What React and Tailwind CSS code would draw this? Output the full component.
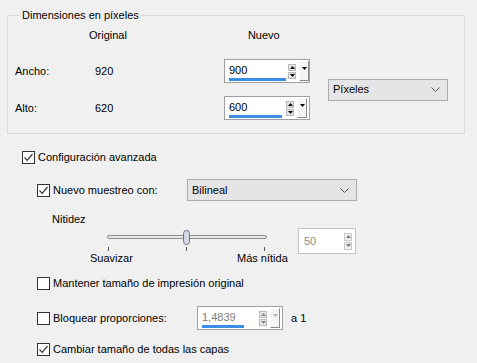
import React from 'react';

const font = { fontFamily: '"Liberation Sans", Arial, sans-serif' };

function Check({ checked }) {
  return (
    <span className="w-[13px] h-[13px] border border-[#333] bg-white flex items-center justify-center shrink-0">
      {checked && (
        <svg width="11" height="11" viewBox="0 0 11 11">
          <path d="M1.5 5.5 L4.2 8.3 L9.5 2" fill="none" stroke="#333" strokeWidth="1.2" />
        </svg>
      )}
    </span>
  );
}

function Arrow({ dir = 'up', color = '#000' }) {
  return (
    <svg width="5" height="3" viewBox="0 0 5 3">
      {dir === 'up' ? <path d="M0 3 L2.5 0 L5 3 Z" fill={color} /> : <path d="M0 0 L2.5 3 L5 0 Z" fill={color} />}
    </svg>
  );
}

function SpinField({ value, underline, disabled, width = 'w-[86px]' }) {
  const c = disabled ? '#8a8a8a' : '#000';
  return (
    <div className={`${width} h-[24px] border border-[#a0a0a0] bg-white flex items-stretch`}>
      <div className="flex-1 flex flex-col justify-center pl-[4px] pr-[2px]">
        <span className={`leading-[14px] mt-[2px] ${disabled ? 'text-[#7d7d7d]' : 'text-black'}`}>{value}</span>
        <span className="h-[3px] mt-[1px] bg-[#3b8ee6]" style={{ width: underline }} />
      </div>
      <div className="flex flex-col justify-center gap-[1px] pr-[3px]">
        <span className="w-[8px] h-[7px] bg-[#e6e6e6] border border-[#b9b9b9] flex items-center justify-center"><Arrow dir="up" color={c} /></span>
        <span className="w-[8px] h-[7px] bg-[#e6e6e6] border border-[#b9b9b9] flex items-center justify-center"><Arrow dir="down" color={c} /></span>
      </div>
      <div className="flex items-center pr-[2px]">
        <span className="w-[10px] h-[20px] bg-[#f4f4f4] border-r border-b border-[#8a8a8a] border-l border-t border-l-white border-t-white flex items-start justify-center pt-[5px]">
          <Arrow dir="down" color={disabled ? '#b5b5b5' : '#000'} />
        </span>
      </div>
    </div>
  );
}

function Select({ label, width }) {
  return (
    <div className={`${width} h-[22px] bg-[#e5e5e5] border border-[#acacac] flex items-center justify-between pl-[4px] pr-[7px]`}>
      <span>{label}</span>
      <svg width="9" height="5" viewBox="0 0 9 5">
        <path d="M0.5 0.5 L4.5 4.5 L8.5 0.5" fill="none" stroke="#555" strokeWidth="1" />
      </svg>
    </div>
  );
}

export default function App() {
  return (
    <div className="w-[477px] h-[363px] bg-[#f0f0f0] overflow-hidden text-[11px] text-black leading-none" style={font}>
      <fieldset className="ml-[7px] w-[458px] h-[125px] border border-[#dcdcdc] mt-[9px] px-[7px]">
        <legend className="ml-[6px] px-[1px] leading-[13px]">Dimensiones en píxeles</legend>
        <div className="flex h-[14px] items-center mt-[6px]">
          <span className="ml-[74px]">Original</span>
          <span className="ml-[121px]">Nuevo</span>
        </div>
        <div className="flex items-center mt-[17px]">
          <div className="flex flex-col">
            <div className="flex items-center h-[24px]">
              <span className="w-[80px]">Ancho:</span>
              <span className="w-[129px]">920</span>
              <SpinField value="900" underline="57px" />
            </div>
            <div className="flex items-center h-[24px] mt-[13px]">
              <span className="w-[80px]">Alto:</span>
              <span className="w-[129px]">620</span>
              <SpinField value="600" underline="53px" />
            </div>
          </div>
          <div className="ml-[18px]">
            <Select label="Píxeles" width="w-[120px]" />
          </div>
        </div>
      </fieldset>

      <div className="flex items-center gap-[3px] ml-[22px] mt-[16px] h-[14px]">
        <Check checked />
        <span>Configuración avanzada</span>
      </div>

      <div className="flex items-center ml-[37px] mt-[15px] h-[22px]">
        <Check checked />
        <span className="ml-[3px] w-[134px]">Nuevo muestreo con:</span>
        <Select label="Bilineal" width="w-[170px]" />
      </div>

      <div className="ml-[52px] mt-[11px] h-[14px] flex items-center">Nitidez</div>

      <div className="flex items-start ml-[105px] mt-[4px] h-[21px]">
        <div className="w-[164px] h-[21px] relative">
          <div className="absolute left-[2px] right-[2px] top-[5px] h-[4px] rounded-full bg-[#e7e7e7] border border-[#8f8f8f]" />
          <div className="absolute left-[78px] top-0 w-[7px] h-[15px] rounded-full bg-[#d4d8e6] border border-[#707080]" />
          <div className="absolute left-[3px] top-[17px] w-px h-[4px] bg-[#555]" />
          <div className="absolute left-[81px] top-[17px] w-px h-[4px] bg-[#555]" />
          <div className="absolute left-[159px] top-[17px] w-px h-[4px] bg-[#555]" />
        </div>
        <div className="ml-[29px] -mt-[2px] w-[58px] h-[26px] shrink-0 border border-[#c5c5c5] bg-white flex items-center justify-between pl-[5px] pr-[3px]">
          <span className="text-[#8a8a8a]">50</span>
          <div className="flex flex-col gap-[1px]">
            <span className="w-[8px] h-[8px] bg-[#f0f0f0] border border-[#c9c9c9] flex items-center justify-center"><Arrow dir="up" color="#777" /></span>
            <span className="w-[8px] h-[8px] bg-[#f0f0f0] border border-[#c9c9c9] flex items-center justify-center"><Arrow dir="down" color="#777" /></span>
          </div>
        </div>
      </div>

      <div className="flex ml-[90px] h-[14px] items-center">
        <span className="w-[147px]">Suavizar</span>
        <span>Más nítida</span>
      </div>

      <div className="flex items-center gap-[3px] ml-[37px] mt-[11px] h-[14px]">
        <Check />
        <span>Mantener tamaño de impresión original</span>
      </div>

      <div className="flex items-center ml-[37px] mt-[15px] h-[26px]">
        <Check />
        <span className="ml-[3px] w-[144px]">Bloquear proporciones:</span>
        <SpinField value="1,4839" underline="42px" disabled />
        <span className="ml-[8px]">a 1</span>
      </div>

      <div className="flex items-center gap-[3px] ml-[37px] mt-[11px] h-[14px]">
        <Check checked />
        <span>Cambiar tamaño de todas las capas</span>
      </div>
    </div>
  );
}
